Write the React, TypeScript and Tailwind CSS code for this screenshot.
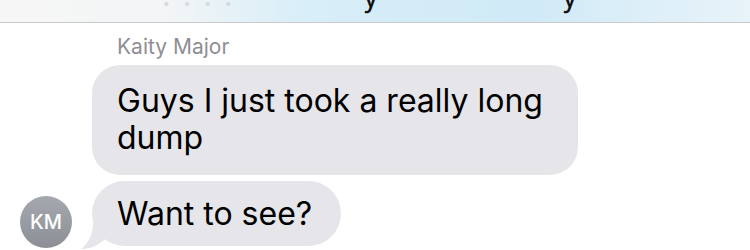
import React from "react";

export default function App() {
  const font = { fontFamily: '"Inter", "Liberation Sans", sans-serif' };
  return (
    <div className="w-[750px] h-[250px] overflow-hidden bg-white relative" style={font}>
      {/* top banner */}
      <div className="h-[23px] border-b border-[#c9c9cb] bg-[linear-gradient(90deg,#f6f6f6_0%,#f3f5f6_22%,#d8eef8_40%,#d0eaf7_70%,#e8f3f9_100%)] overflow-hidden relative">
        <div className="flex items-start h-full">
          <div className="ml-[162px] mt-[-27px] text-[30px] text-[#d6dadd] tracking-[12px]">....</div>
          <div className="ml-[118px] mt-[-26px] text-[30px] text-[#111]">y</div>
          <div className="ml-[182px] mt-[-26px] text-[30px] text-[#111]">y</div>
        </div>
      </div>

      {/* name */}
      <div className="pl-[117px] pt-[11px] text-[21px] leading-[26px] text-[#8e8e93]">Kaity Major</div>

      {/* first bubble */}
      <div className="pl-[92px] pt-[5px]">
        <div className="w-[486px] rounded-[28px] bg-[#e5e5ea] pl-[25px] pr-[18px] pt-[17px] pb-[19px] text-[32px] leading-[37px] text-black">
          Guys I just took a really long dump
        </div>
      </div>

      {/* second row */}
      <div className="flex items-end pt-[6px]">
        <div className="ml-[20px] mb-[-2px] w-[52px] h-[52px] rounded-full bg-[linear-gradient(180deg,#a6a8af,#8d8f97)] flex items-center justify-center text-white text-[20px] font-medium">
          KM
        </div>
        <div className="relative ml-[20px]">
          <svg className="absolute left-[-11px] bottom-[-3px]" width="30" height="26" viewBox="0 0 30 26">
            <path d="M12 0 C12 10 8 20 0 26 C10 26 18 22 24 16 L30 0 Z" fill="#e5e5ea" />
          </svg>
          <div className="relative rounded-[33px] bg-[#e5e5ea] pl-[25px] pr-[29px] h-[65px] flex items-center text-[32px] text-black">
            Want to see?
          </div>
        </div>
      </div>
    </div>
  );
}
